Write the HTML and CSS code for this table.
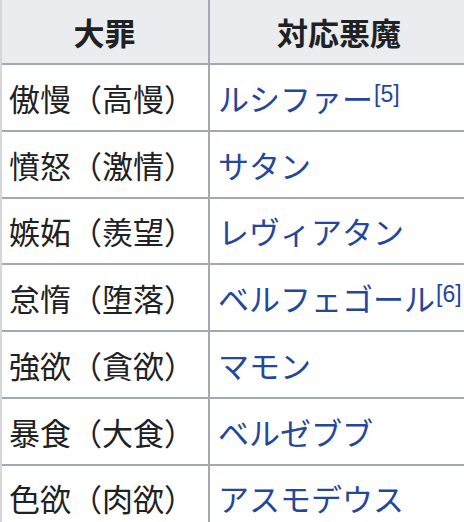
FILE: index.html
```html
<!DOCTYPE html>
<html lang="ja">
<head>
<meta charset="utf-8">
<link rel="stylesheet" href="styles.css">
</head>
<body>
<div class="table">
  <div class="cell head">大罪</div>
  <div class="cell head">対応悪魔</div>
  <div class="cell">傲慢（高慢）</div>
  <div class="cell"><a class="link">ルシファー</a><sup class="ref">[5]</sup></div>
  <div class="cell">憤怒（激情）</div>
  <div class="cell"><a class="link">サタン</a></div>
  <div class="cell">嫉妬（羨望）</div>
  <div class="cell"><a class="link">レヴィアタン</a></div>
  <div class="cell">怠惰（堕落）</div>
  <div class="cell"><a class="link">ベルフェゴール</a><sup class="ref">[6]</sup></div>
  <div class="cell">強欲（貪欲）</div>
  <div class="cell"><a class="link">マモン</a></div>
  <div class="cell">暴食（大食）</div>
  <div class="cell"><a class="link">ベルゼブブ</a></div>
  <div class="cell">色欲（肉欲）</div>
  <div class="cell"><a class="link">アスモデウス</a></div>
</div>
</body>
</html>
```

FILE: styles.css
```css
html, body {
  margin: 0;
  padding: 0;
  background: #ffffff;
  overflow: hidden;
}

.table {
  display: grid;
  grid-template-columns: 208px 258px;
  grid-template-rows: 65px repeat(7, 66.75px);
  border-left: 2px solid #d4d7dc;
  width: 466px;
  font-family: "Noto Sans CJK JP", "Noto Sans", sans-serif;
  font-size: 31px;
  color: #202122;
}

.cell {
  display: flex;
  align-items: center;
  padding: 0 8px;
  border-bottom: 2px solid #a2a9b1;
  white-space: nowrap;
  line-height: 1;
}

.cell:nth-child(odd) {
  border-right: 2px solid #a2a9b1;
  padding-left: 7px;
}

.head {
  background: #eaecf0;
  justify-content: center;
  font-weight: bold;
}

.link {
  color: #25479b;
  text-decoration: none;
}

.ref {
  font-family: "Liberation Sans", Arial, sans-serif;
  font-size: 23px;
  line-height: 1;
  vertical-align: baseline;
  color: #25479b;
  align-self: flex-start;
  margin-top: 18px;
  margin-left: 1px;
}
```
